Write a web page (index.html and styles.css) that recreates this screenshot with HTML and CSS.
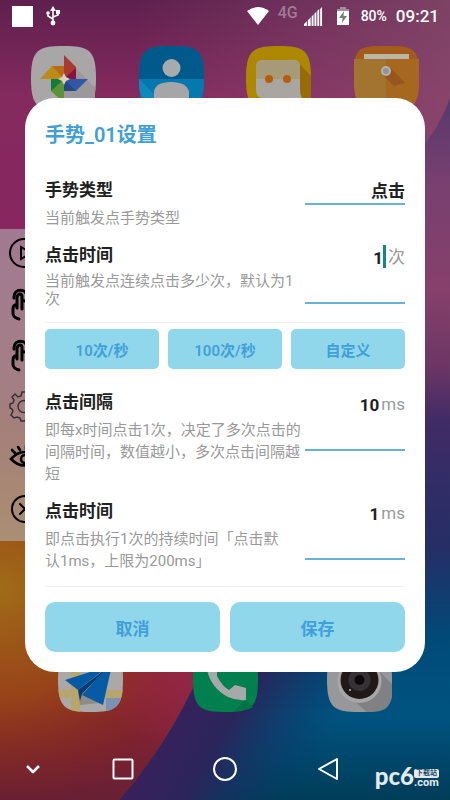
FILE: index.html
```html
<!DOCTYPE html>
<html lang="zh-CN">
<head>
    <meta charset="UTF-8">
    <meta name="viewport" content="width=device-width, initial-scale=1.0">
    <title>手势_01设置</title>
    <link rel="stylesheet" href="styles.css">
</head>
<body>
    <div class="screen">
        <svg class="wallpaper" viewBox="0 0 450 800" preserveAspectRatio="none" aria-hidden="true">
            <defs>
                <linearGradient id="wpBase" x1="0" y1="0" x2="0" y2="1">
                    <stop offset="0" stop-color="#5e204e"/>
                    <stop offset="0.12" stop-color="#842a5f"/>
                    <stop offset="0.3" stop-color="#882660"/>
                    <stop offset="0.7" stop-color="#98401c"/>
                    <stop offset="0.86" stop-color="#8e2430"/>
                    <stop offset="1" stop-color="#682034"/>
                </linearGradient>
                <linearGradient id="wpLight" x1="0.3" y1="0" x2="1" y2="0">
                    <stop offset="0" stop-color="#8a5070" stop-opacity="0"/>
                    <stop offset="1" stop-color="#8a5070" stop-opacity="0.7"/>
                </linearGradient>
                <radialGradient id="wpOrange" gradientUnits="userSpaceOnUse" cx="0" cy="590" r="220">
                    <stop offset="0" stop-color="#a06c18"/>
                    <stop offset="0.5" stop-color="#9a4a14" stop-opacity="0.8"/>
                    <stop offset="1" stop-color="#802018" stop-opacity="0"/>
                </radialGradient>
                <radialGradient id="wpPink" gradientUnits="userSpaceOnUse" cx="210" cy="660" r="110">
                    <stop offset="0" stop-color="#93264f"/>
                    <stop offset="1" stop-color="#93264f" stop-opacity="0"/>
                </radialGradient>
                <linearGradient id="wpWave" gradientUnits="userSpaceOnUse" x1="0" y1="100" x2="0" y2="800">
                    <stop offset="0" stop-color="#58396c"/>
                    <stop offset="0.12" stop-color="#784070"/>
                    <stop offset="0.27" stop-color="#86406b"/>
                    <stop offset="0.38" stop-color="#6c3664"/>
                    <stop offset="0.46" stop-color="#402b66"/>
                    <stop offset="0.64" stop-color="#252e66"/>
                    <stop offset="0.77" stop-color="#004a78"/>
                    <stop offset="0.88" stop-color="#005380"/>
                    <stop offset="1" stop-color="#003c58"/>
                </linearGradient>
                <linearGradient id="wpViolet" gradientUnits="userSpaceOnUse" x1="180" y1="680" x2="320" y2="760">
                    <stop offset="0" stop-color="#3a205c"/>
                    <stop offset="0.4" stop-color="#2a255a"/>
                    <stop offset="1" stop-color="#063c6c" stop-opacity="0"/>
                </linearGradient>
            </defs>
            <rect width="450" height="800" fill="url(#wpBase)"/>
            <rect width="450" height="300" fill="url(#wpLight)"/>
            <rect y="360" width="300" height="440" fill="url(#wpOrange)"/>
            <rect x="60" y="540" width="300" height="260" fill="url(#wpPink)"/>
            <path d="M450 98C440 124 430 142 400 170C300 260 270 560 192 690Q164 748 120 800H450Z" fill="url(#wpWave)"/>
            <path d="M240 600Q220 640 192 690Q164 748 120 800H450V600Z" fill="url(#wpViolet)"/>
        </svg>

        <header class="status-bar">
            <span class="notice"></span>
            <svg class="usb" viewBox="0 0 14 20" fill="none" stroke="#fff" stroke-width="1.6">
                <path d="M7 3V17M7 13L2 10V7M7 11L12 9V5"/>
                <path d="M4 5L7 0L10 5Z" fill="#fff" stroke="none"/>
                <circle cx="7" cy="17" r="2.4" fill="#fff" stroke="none"/>
                <circle cx="2" cy="7" r="1.8" fill="#fff" stroke="none"/>
                <path d="M10 4H14V8H10Z" fill="#fff" stroke="none"/>
            </svg>
            <span class="spacer"></span>
            <svg class="wifi" viewBox="0 0 22 18"><path d="M0 4Q11 -4 22 4L11 18Z" fill="#fff"/></svg>
            <span class="network">4G</span>
            <svg class="signal" viewBox="0 0 20 20" fill="#fff">
                <path d="M0 20V18L3 15V20ZM4 20V14L7 11V20ZM8 20V10L10 8V20ZM11 20V7L13 5V20ZM14 20V4L16 2V20ZM17 20V2L19 0V20Z"/>
            </svg>
            <svg class="battery" viewBox="0 0 12 18">
                <path d="M3 0H9V2H12V5H0V2H3Z" fill="#a58b9b"/>
                <path d="M0 4H12V18H0Z" fill="#fff"/>
                <path d="M7 4L2 11H5.500L5 16L10 9H6.500Z" fill="#6b8474"/>
            </svg>
            <span class="percent">80%</span>
            <time class="clock">09:21</time>
        </header>

        <div class="apps">
            <svg class="app" viewBox="0 0 65 65">
                <path d="M32.500 0C58 0 65 4 65 32.500S58 65 32.500 65S0 61 0 32.500S7 0 32.500 0Z" fill="#a9a6a8"/>
                <path d="M45 22L64 42V62L40 64L22 45Z" fill="#9b989b"/>
                <path d="M33 9L45 21V33H33Z" fill="#aa3a31"/><path d="M33 33L45 22V33Z" fill="#86123f"/>
                <path d="M9 33L21 20H33V33Z" fill="#bd8b18"/><path d="M21 20H33V33Z" fill="#b36c18"/>
                <path d="M33 33H57L45 45H33Z" fill="#3159a3"/><path d="M33 33L45 45H33Z" fill="#294686"/>
                <path d="M20 33H33V57L20 45Z" fill="#5a9338"/><path d="M20 33H33L20 45Z" fill="#147a3c"/>
                <path d="M33 27L35 31L39 33L35 35L33 39L31 35L27 33L31 31Z" fill="#d8d3bd"/>
            </svg>
            <svg class="app" viewBox="0 0 65 65">
                <path d="M32.500 0C58 0 65 4 65 32.500S58 65 32.500 65S0 61 0 32.500S7 0 32.500 0Z" fill="#006fa4"/>
                <path d="M0 33H65C65 60 58 65 32 65S0 60 0 33Z" fill="#0579ad"/>
                <path d="M0 33L16 49V62C3 58 0 50 0 33Z" fill="#1287bd"/>
                <path d="M0 33C0 3 6 0 32.500 0S65 3 65 33Z" fill="#00598b"/>
                <circle cx="32.500" cy="22" r="9" fill="#a8abad"/>
                <path d="M15 65V46Q16 36 32 36T50 46V65Z" fill="#a5a6a8"/>
            </svg>
            <svg class="app" viewBox="0 0 65 65">
                <path d="M32.500 0C58 0 65 4 65 32.500S58 65 32.500 65S0 61 0 32.500S7 0 32.500 0Z" fill="#ad8700"/>
                <path d="M52 16L65 30V55L54 63L48 52Z" fill="#976b08"/>
                <path d="M17 14H48Q54 14 54 21V44Q54 51 60 58L48 52H17Q10 52 10 44V21Q10 14 17 14Z" fill="#a9a5a1"/>
                <path d="M17 14H48Q54 14 54 21V33H10V21Q10 14 17 14Z" fill="#a79a78"/>
                <circle cx="23" cy="33" r="4" fill="#b85d0b"/><circle cx="41" cy="33" r="4" fill="#b85d0b"/>
            </svg>
            <svg class="app" viewBox="0 0 65 65">
                <path d="M32.500 0C58 0 65 4 65 32.500S58 65 32.500 65S0 61 0 32.500S7 0 32.500 0Z" fill="#a3692c"/>
                <path d="M0 13H32V65C6 65 0 60 0 32Z" fill="#a2742f"/>
                <path d="M32 13H65V32C65 60 60 65 32 65Z" fill="#a6681e"/>
                <path d="M1 13C4 1 10 0 32 0S60 1 64 13Z" fill="#a35b1b"/>
                <path d="M36 21L51 37L40 40L29 29Z" fill="#96561d"/>
                <path d="M10 8H55V13H10Z" fill="#b9b5a7"/>
                <circle cx="32" cy="25" r="5" fill="#b4b5ae"/><circle cx="32" cy="25" r="3" fill="#8d969a"/>
            </svg>
        </div>

        <div class="dock">
            <svg class="app" viewBox="0 0 65 65">
                <defs><clipPath id="mapClip"><path d="M32.500 0C58 0 65 4 65 32.500S58 65 32.500 65S0 61 0 32.500S7 0 32.500 0Z"/></clipPath></defs>
                <g clip-path="url(#mapClip)">
                    <path d="M0 0H65V65H0Z" fill="#aaa9a8"/>
                    <path d="M0 43H65V51H0ZM13 0H22V65H13Z" fill="#b7a56d"/>
                    <path d="M48 51H65V65H48Z" fill="#7d91b0"/>
                    <path d="M20 45L42 56L22 58Z" fill="#8e8c83"/>
                </g>
                <path d="M7 33L54 18L45 58L24 48L47 22L20 43Z" fill="#075aa4"/>
                <path d="M20 43L49 21L24 47L22 54Z" fill="#083d74"/>
            </svg>
            <svg class="app" viewBox="0 0 65 65">
                <path d="M32.500 0C58 0 65 4 65 32.500S58 65 32.500 65S0 61 0 32.500S7 0 32.500 0Z" fill="#00804e"/>
                <path d="M52 53L41 64Q54 64 60 60Z" fill="#007344"/>
                <path d="M14 17L24 21L24 29Q29 39 36 43L42 38L53 41V53Q44 54 35 50Q18 41 14 23Z" fill="#a5a9a7"/>
            </svg>
            <svg class="app" viewBox="0 0 65 65">
                <path d="M32.500 0C58 0 65 4 65 32.500S58 65 32.500 65S0 61 0 32.500S7 0 32.500 0Z" fill="#98989b"/>
                <path d="M48 20L65 37V50C62 63 55 65 40 65L18 46Z" fill="#818184"/>
                <circle cx="32.500" cy="34" r="22" fill="#a9a6a8"/>
                <circle cx="32.500" cy="33" r="19" fill="#211819"/>
                <circle cx="32.500" cy="33" r="11" fill="#343235"/>
                <circle cx="32.500" cy="33" r="5" fill="#0b0a0c"/>
                <circle cx="23" cy="43" r="1" fill="#bbb"/>
            </svg>
        </div>

        <nav class="nav-bar">
            <button type="button" aria-label="收起"><svg viewBox="0 0 24 24"><path d="M6 9L12 15L18 9" stroke-width="2.600"/></svg></button>
            <button type="button" aria-label="最近任务"><svg viewBox="0 0 24 24"><rect x="2.500" y="2.500" width="19" height="19" rx="1"/></svg></button>
            <button type="button" aria-label="主页"><svg viewBox="0 0 24 24"><circle cx="12" cy="12" r="11"/></svg></button>
            <button type="button" aria-label="返回"><svg viewBox="0 0 24 24"><path d="M21 2V22L3 12Z"/></svg></button>
        </nav>

        <!-- 悬浮工具栏 -->
        <aside class="toolbar">
            <button type="button" aria-label="播放"><svg viewBox="0 0 30 30"><circle cx="15" cy="15" r="14"/><path d="M12 9V21L22 15Z"/></svg></button>
            <button type="button" aria-label="点击手势"><svg class="bold" viewBox="0 0 30 30"><path d="M5 9V8C5 -1 18 -1 18 8"/><path d="M13 20V8Q13 5 11 5T8 8V19M8 15Q4 16 4 20V25Q5 29 10 30M13 12Q18 11 18 15V20M18 15Q23 14 23 18V26Q22 29 19 30"/></svg></button>
            <button type="button" aria-label="滑动手势"><svg class="bold" viewBox="0 0 30 30"><path d="M5 9V8C5 -1 18 -1 18 8"/><path d="M13 20V8Q13 5 11 5T8 8V19M8 15Q4 16 4 20V25Q5 29 10 30M13 12Q18 11 18 15V20M18 15Q23 14 23 18V26Q22 29 19 30"/></svg></button>
            <button type="button" aria-label="设置"><svg class="thin" viewBox="0 0 30 30"><path d="M12 5L13 1H18L19 5L22 6L25 4L28 8L26 11L27 14L30 15V18L27 19L25 22L27 25L23 28L20 26L17 27L16 30H12L11 27L8 26L5 27L2 24L4 20L3 18L1 17V13L4 12L5 9L3 6L6 3L9 6Z"/><circle cx="15" cy="15.500" r="6"/></svg></button>
            <button type="button" aria-label="显示"><svg viewBox="0 0 30 30"><path d="M2 17Q15 3 28 17Q15 30 2 17ZM6 11L3 8M11 8L9 5M17 7V4" stroke-width="2.600"/><circle cx="16" cy="17" r="4" stroke-width="2.600"/></svg></button>
            <button type="button" aria-label="关闭"><svg viewBox="0 0 30 30"><circle cx="16" cy="16" r="13"/><path d="M11 11L21 21M21 11L11 21"/></svg></button>
        </aside>

        <div class="overlay">
            <form class="dialog" id="gestureForm">
                <h1>手势_01设置</h1>

                <div class="row">
                    <div class="info">
                        <label for="type">手势类型</label>
                        <p>当前触发点手势类型</p>
                    </div>
                    <div class="field field-short">
                        <select id="type" name="type">
                            <option>点击</option>
                        </select>
                    </div>
                </div>

                <div class="row">
                    <div class="info">
                        <label for="count">点击时间</label>
                        <p class="tight">当前触发点连续点击多少次，默认为1次</p>
                    </div>
                    <div class="field">
                        <input type="text" id="count" name="count" value="1" inputmode="numeric">
                        <span class="caret"></span>
                        <span class="unit">次</span>
                    </div>
                </div>

                <div class="presets">
                    <button type="button">10次/秒</button>
                    <button type="button">100次/秒</button>
                    <button type="button">自定义</button>
                </div>

                <div class="row">
                    <div class="info">
                        <label for="interval">点击间隔</label>
                        <p>即每x时间点击1次，决定了多次点击的间隔时间，数值越小，多次点击间隔越短</p>
                    </div>
                    <div class="field">
                        <input type="text" id="interval" name="interval" value="10" inputmode="numeric">
                        <span class="unit">ms</span>
                    </div>
                </div>

                <div class="row">
                    <div class="info">
                        <label for="duration">点击时间</label>
                        <p>即点击执行1次的持续时间「点击默<br>认1ms，上限为200ms」</p>
                    </div>
                    <div class="field">
                        <input type="text" id="duration" name="duration" value="1" inputmode="numeric">
                        <span class="unit">ms</span>
                    </div>
                </div>

                <div class="actions">
                    <button type="button">取消</button>
                    <button type="submit">保存</button>
                </div>
            </form>
        </div>

        <div class="watermark">
            <span class="mark-name">pc6</span>
            <span class="mark-side">
                <span class="mark-tag">下载站</span>
                <span class="mark-domain">.com</span>
            </span>
        </div>
    </div>
</body>
</html>
```

FILE: styles.css
```css
* {
    margin: 0;
    padding: 0;
    box-sizing: border-box;
}

body {
    font-family: Roboto, "Noto Sans CJK SC", sans-serif;
    background: #5e204e;
}

button,
input,
select {
    font-family: inherit;
    border: none;
    background: none;
}

button {
    cursor: pointer;
}

.screen {
    position: relative;
    min-height: 100vh;
    display: flex;
    flex-direction: column;
    overflow: hidden;
}

.wallpaper {
    position: absolute;
    width: 100%;
    height: 100%;
}

.status-bar,
.apps,
.dock,
.nav-bar {
    position: relative;
}

/* 状态栏 */
.status-bar {
    display: flex;
    align-items: center;
    height: 32px;
    padding: 0 11px 0 12px;
    color: #fff;
}

.notice {
    width: 21px;
    height: 21px;
    background: #fff;
}

.usb {
    width: 14px;
    height: 20px;
    margin-left: 13px;
}

.spacer {
    flex: 1;
}

.wifi {
    width: 22px;
    height: 18px;
}

.network {
    margin: 0 6px 8px 9px;
    font-size: 16px;
    font-weight: 500;
    color: #a07a96;
}

.signal {
    width: 19px;
    height: 19px;
}

.battery {
    width: 12px;
    height: 18px;
    margin: 0 12px 0 14px;
}

.percent {
    font-size: 14px;
    font-weight: 500;
}

.clock {
    margin-left: 9px;
    font-size: 17px;
    font-weight: 500;
}

/* 桌面图标 */
.app {
    display: block;
    width: 65px;
    height: 65px;
}

.apps {
    display: flex;
    justify-content: space-between;
    padding: 14px 31px 0;
}

.dock {
    display: flex;
    justify-content: space-between;
    margin-top: auto;
    padding: 0 58px 26px;
}

.nav-bar {
    display: grid;
    grid-template-columns: 65fr 115fr 90fr 115fr 65fr;
    height: 62px;
}

.nav-bar button {
    display: flex;
    align-items: center;
    justify-content: center;
}

.nav-bar svg {
    width: 24px;
    height: 24px;
    fill: none;
    stroke: #fff;
    stroke-width: 2;
    stroke-linejoin: round;
    overflow: visible;
}

/* 悬浮工具栏 */
.toolbar {
    position: absolute;
    top: 229px;
    left: 0;
    display: flex;
    flex-direction: column;
    gap: 21px;
    padding: 9px 9px 18px;
    background: rgba(178, 178, 178, 0.6);
}

.toolbar button {
    width: 30px;
    height: 30px;
}

.toolbar svg {
    display: block;
    fill: none;
    stroke: #000;
    stroke-width: 2;
    stroke-linecap: round;
    overflow: visible;
}

.toolbar .bold {
    stroke-width: 3;
}

.toolbar .thin {
    stroke: #333;
    stroke-width: 1.5;
}

/* 设置弹窗 */
.overlay {
    position: absolute;
    inset: 0;
    display: flex;
    align-items: center;
    padding: 0 25px 30px;
}

.dialog {
    width: 100%;
    padding: 23px 20px 20px;
    background: #fff;
    border-radius: 30px;
}

.dialog h1 {
    margin-bottom: 29px;
    font-size: 20px;
    font-weight: 600;
    line-height: 28px;
    color: #419fd3;
}

.row {
    display: flex;
    justify-content: space-between;
    margin-bottom: 14px;
}

.info {
    flex: 0 1 260px;
}

.info label {
    display: block;
    margin-bottom: 5px;
    font-size: 17px;
    font-weight: 600;
    line-height: 24px;
    color: #212121;
}

.info p {
    font-size: 15px;
    line-height: 22px;
    color: #999;
}

.info .tight {
    line-height: 18px;
}

.field {
    display: flex;
    align-items: flex-start;
    width: 100px;
    flex-shrink: 0;
    height: 61px;
    padding-top: 2px;
    border-bottom: 2px solid #68b3d3;
}

.field-short {
    height: 27px;
    padding-top: 0;
}

.field input,
.field select {
    flex: 1;
    width: 0;
    height: 25px;
    font-size: 17px;
    font-weight: 700;
    color: #212121;
    text-align: right;
    outline: none;
}

.field select {
    appearance: none;
    font-weight: 600;
    text-align-last: right;
}

.caret {
    width: 3px;
    height: 23px;
    background: #16877d;
}

.unit {
    margin-left: 2px;
    font-size: 17px;
    line-height: 25px;
    color: #999;
}

.presets {
    display: grid;
    grid-template-columns: repeat(3, 1fr);
    gap: 9px;
    margin-bottom: 21px;
    padding-top: 6px;
    border-top: 1px solid #f0f0f0;
}

.presets button {
    height: 40px;
    border-radius: 5px;
    background: #90d7eb;
    font-size: 15px;
    font-weight: 600;
    color: #419fd9;
}

.actions {
    display: grid;
    grid-template-columns: 1fr 1fr;
    gap: 10px;
    padding-top: 15px;
    border-top: 1px solid #f0f0f0;
}

.actions button {
    height: 50px;
    border-radius: 10px;
    background: #90d7eb;
    font-size: 17px;
    font-weight: 600;
    color: #419fd9;
}

/* 水印 */
.watermark {
    position: absolute;
    right: 11px;
    bottom: 12px;
    display: flex;
    align-items: flex-end;
    color: #e4eaee;
    font-weight: 700;
}

.mark-name {
    font-family: Lato, sans-serif;
    font-size: 24px;
    font-weight: 900;
    line-height: 24px;
}

.mark-side {
    display: flex;
    flex-direction: column;
}

.mark-tag {
    padding: 0 2px;
    border-radius: 2px;
    background: #e4eaee;
    font-size: 7px;
    line-height: 9px;
    text-align: center;
    color: #1d4c66;
}

.mark-domain {
    font-size: 11px;
    line-height: 10px;
}
```
